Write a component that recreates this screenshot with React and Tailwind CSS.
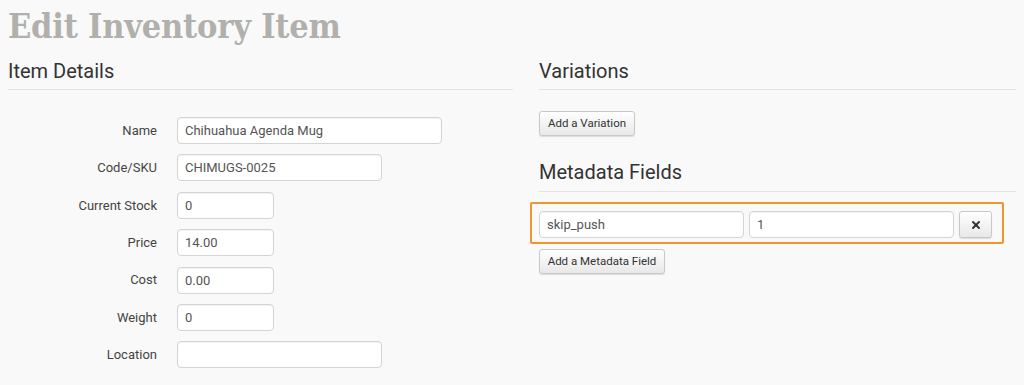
import React from 'react'
import { X } from 'lucide-react'

const fields = [
  { label: 'Name', value: 'Chihuahua Agenda Mug', width: 'w-[265px]' },
  { label: 'Code/SKU', value: 'CHIMUGS-0025', width: 'w-[205px]' },
  { label: 'Current Stock', value: '0', width: 'w-[97px]' },
  { label: 'Price', value: '14.00', width: 'w-[97px]' },
  { label: 'Cost', value: '0.00', width: 'w-[97px]' },
  { label: 'Weight', value: '0', width: 'w-[97px]' },
  { label: 'Location', value: '', width: 'w-[205px]' },
]

const inputCls =
  'h-[27px] bg-white border border-[#d4d4d4] rounded-[4px] px-[7px] text-[13px] text-[#555] shadow-[inset_0_1px_1px_rgba(0,0,0,0.05)] outline-none'

const btnCls =
  'h-[25px] px-0 whitespace-nowrap text-center text-[11.5px] text-[#333] border border-[#c8c8c8] rounded-[3px] bg-gradient-to-b from-white to-[#e8e8e8] shadow-[0_1px_1px_rgba(0,0,0,0.12)]'

const SectionTitle = ({ children }) => (
  <div className="border-b border-[#e4e4e4] h-[39px]">
    <h2 className="text-[20px] leading-[24px] pt-[8px] text-[#333]">{children}</h2>
  </div>
)

export default function App() {
  return (
    <div className="min-h-screen bg-[#f9f9f9] px-[8px] font-['Roboto',sans-serif] overflow-hidden">
      <h1 className="font-['DejaVu_Serif',serif] font-bold font-stretch-condensed text-[34px] leading-[44px] text-[#b1b0ac] h-[51px] pt-[4px] tracking-[-0.2px] whitespace-nowrap">
        Edit Inventory Item
      </h1>

      <div className="flex gap-[26px]">
        <div className="w-[505px] shrink-0">
          <SectionTitle>Item Details</SectionTitle>
          <div className="flex flex-col gap-[10.4px] pt-[27px]">
            {fields.map((f) => (
              <div key={f.label} className="flex items-center">
                <label className="w-[149px] text-right text-[13px] text-[#444]">{f.label}</label>
                <input readOnly value={f.value} className={`${inputCls} ml-[20px] ${f.width}`} />
              </div>
            ))}
          </div>
        </div>

        <div className="flex-1">
          <SectionTitle>Variations</SectionTitle>
          <div className="pt-[20px]">
            <button className={`${btnCls} w-[96px]`}>Add a Variation</button>
          </div>

          <div className="border-b border-[#e4e4e4] h-[56px]">
            <h2 className="text-[20px] leading-[24px] pt-[24px] text-[#333]">Metadata Fields</h2>
          </div>

          <div className="mt-[10px] -ml-[9px] w-[474px] border-2 border-[#f0952c] rounded-[2px] pl-[7px] pt-[7px] pb-[4px] flex gap-[5px]">
            <input readOnly value="skip_push" className={`${inputCls} w-[205px]`} />
            <input readOnly value="1" className={`${inputCls} w-[205px]`} />
            <button className="h-[27px] w-[33px] flex items-center justify-center border border-[#c8c8c8] rounded-[3px] bg-gradient-to-b from-white to-[#e8e8e8] shadow-[0_1px_1px_rgba(0,0,0,0.12)]">
              <X size={12} strokeWidth={4} className="text-[#333]" />
            </button>
          </div>

          <div className="pt-[4px]">
            <button className={`${btnCls} w-[126px]`}>Add a Metadata Field</button>
          </div>
        </div>
      </div>
    </div>
  )
}
